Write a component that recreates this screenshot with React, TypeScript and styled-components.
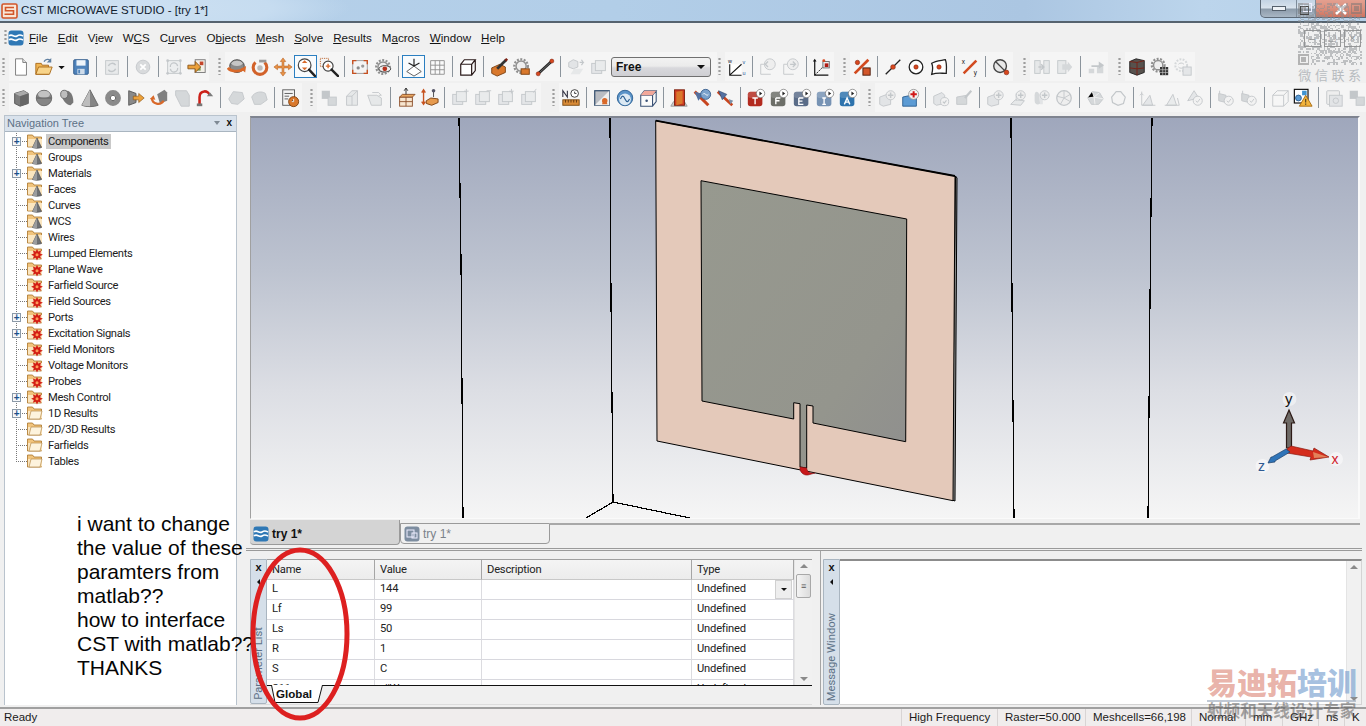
import React from "react";
import styled, { createGlobalStyle } from "styled-components";

const Global = createGlobalStyle`
  html, body { margin: 0; padding: 0; background: #f0f0f0; overflow: hidden; }
  * { box-sizing: border-box; }
`;

const UI = `"Liberation Sans", Arial, sans-serif`;
const NARROW = `Roboto, "Liberation Sans", sans-serif`;
const CJK = `"Liberation Sans", "Noto Sans CJK SC", sans-serif`;

const Root = styled.div`
  position: relative; width: 1366px; height: 726px; overflow: hidden;
  display: flex; flex-direction: column; background: #f0f0f0;
  font: 12px/14px ${UI}; color: #151515;
`;
const TitleBar = styled.header`
  flex: 0 0 23px; display: flex; align-items: flex-start; padding: 3px 0 0 1px; gap: 3px;
  background: radial-gradient(ellipse 260px 34px at 90px 8px, #cfe1f2 0, #c6dcf0 70%, transparent 100%),
    linear-gradient(90deg, #b7d1ea, #b2cee8 45%, #abc6e2 75%, #bcd5ec 88%, #b6d0e8);
  border-bottom: 2px solid #56636f; box-shadow: 0 1px 0 #fff;
`;
const TitleText = styled.h1`
  margin: 0; font: 400 11.5px/15px ${UI}; color: #10202e; flex: 1;
`;
const WinButtons = styled.div`
  display: flex; margin-top: -3px; height: 18px; width: 106px;
  border: 1px solid #5d6a78; border-top: 0; border-radius: 0 0 0 5px;
  background: linear-gradient(#c3d3e3, #d8e2ec 45%, #8d9cab 55%, #a8b6c4);
`;
const WinBtn = styled.span<{ $w: number; $red?: boolean }>`
  width: ${p => p.$w}px; display: flex; align-items: center; justify-content: center;
  border-right: 1px solid #7e8c9a; color: #fff;
  ${p => p.$red ? "background: linear-gradient(#e4a090, #da8f7d 50%, #cf7460); border-right: 0;" : ""}
`;
const MenuBar = styled.nav`
  flex: 0 0 29px; display: flex; align-items: center; padding: 1px 5px 0 3px; background: #f0f0f0;
`;
const Grip = styled.span`
  flex: 0 0 8px; align-self: stretch; margin: 6px 0;
  background: radial-gradient(circle at 2.5px 1px, #9d9d9d 1px, transparent 1.3px) 0 0 / 8px 4px repeat-y;
`;
const MenuGrip = styled(Grip)`flex-basis: 5px; margin: 6px 0;`;
const LogoGap = styled.span`flex: 0 0 5px;`;
const MenuItem = styled.span`
  margin-right: 10px; font-size: 11.6px; color: #141414; white-space: nowrap;
  u { text-underline-offset: 1px; }
`;
const MdiButtons = styled.div`
  margin-left: auto; display: flex; gap: 3px; opacity: .55;
`;
const MdiBtn = styled.span`
  width: 17px; height: 17px; border: 1px solid #555; display: flex; align-items: center; justify-content: center;
  font: 11px/11px ${UI}; color: #444;
`;
const ToolRow = styled.div<{ $h: number }>`
  flex: 0 0 ${p => p.$h}px; display: flex; padding-left: 1px; align-items: flex-start;
`;
const ToolGroup = styled.div<{ $ml?: number }>`
  display: flex; align-items: center; height: 29px; margin-left: ${p => p.$ml ?? 0}px;
  padding-right: 1px; background: linear-gradient(90deg, transparent 8px, #f5f5f5 8px);
`;
const Tool = styled.span<{ $w?: number; $active?: boolean }>`
  flex: 0 0 ${p => p.$w ?? 23}px; width: ${p => p.$w ?? 23}px; min-width: 0; height: 23px; display: flex; align-items: center; justify-content: center;
  ${p => p.$active ? "outline: 1px solid #2b7fc1; outline-offset: -1px; background: #f8fbfd;" : ""}
`;
const ToolSvg = styled.svg`flex: none;`;
const ToolSep = styled.span`
  flex: 0 0 8px; height: 21px; display: flex; justify-content: center;
  &::before { content: ""; width: 1px; background: #8b949c; }
`;
const Combo = styled.div`
  flex: 0 0 100px; height: 20px; margin: 0 5px 0 1px; padding: 0 5px 0 4px; display: flex; align-items: center;
  justify-content: space-between; border: 1px solid #707070; border-radius: 3px;
  background: linear-gradient(#f2f2f2, #ebebeb 45%, #d8d8dc 55%, #cfcfd3);
  font: 700 12px ${UI}; color: #111;
  &::after { content: ""; border: 4px solid transparent; border-top: 4px solid #111; border-bottom: 0; }
`;
const Main = styled.main`
  flex: 1; min-height: 0; display: flex;
`;
const NavPanel = styled.aside`
  flex: 0 0 233px; margin: 0 13px 0 4px; display: flex; flex-direction: column;
  border-right: 1px solid #b9c3cd; border-left: 1px solid #b9c3cd; background: #fff;
`;
const NavHeader = styled.div`
  flex: 0 0 16px; display: flex; align-items: center; justify-content: space-between; padding: 0 4px 1px 2px;
  background: #d9e2ec; color: #5d7186; font-size: 11px; border-top: 1px solid #b9c3cd; border-bottom: 1px solid #a9b5c0;
`;
const HeaderBtns = styled.span`
  display: flex; align-items: center; gap: 6px; color: #111; font: 700 10px/10px ${UI};
`;
const DropCaret = styled.span`
  width: 0; height: 0; border: 3px solid transparent; border-top: 4px solid #7f8a94; border-bottom: 0;
`;
const Tree = styled.ul`
  margin: 0; padding: 1px 0 0 0; list-style: none; font: 11.2px/15px ${NARROW}; letter-spacing: -.33px;
`;
const TreeRow = styled.li`
  position: relative; display: flex; align-items: center; height: 16px; padding-left: 11px;
`;
const Gutter = styled.span<{ $last?: boolean }>`
  flex: 0 0 11px; height: 16px;
  background:
    repeating-linear-gradient(90deg, #777 0 1px, transparent 1px 2px) 0 8px / 11px 1px no-repeat,
    repeating-linear-gradient(#777 0 1px, transparent 1px 2px) 0 0 / 1px ${p => p.$last ? 8 : 16}px no-repeat;
`;
const Expander = styled.span`
  position: absolute; left: 7px; top: 4px; width: 9px; height: 9px; background: #f6f8fa; border: 1px solid #8c9aa8;
  display: flex; align-items: center; justify-content: center; color: #1b4f8a; font: 700 10px/8px ${UI};
`;
const TreeIcon = styled.span`flex: 0 0 17px; height: 16px; display: flex;`;
const TreeLabel = styled.span<{ $sel?: boolean }>`
  margin-left: 2px; padding: 0 2px; height: 15px; white-space: nowrap; color: #1c1c1c;
  background: ${p => p.$sel ? "#c9c9c9" : "transparent"};
`;
const RightPane = styled.section`
  flex: 1; min-width: 0; display: flex; flex-direction: column; padding-right: 4px;
`;
const Viewport = styled.div`
  flex: 0 0 403px; margin: 1px 2px 0 0; border-top: 2px solid #7f8490; border-left: 1px solid #a0a0a0;
  border-right: 2px solid #fafafa; border-bottom: 1px solid #fafafa;
  background: linear-gradient(#9fa7bc 0%, #bdc3d0 38%, #dcdee4 68%, #f5f5f5 100%); overflow: hidden;
  display: flex;
`;
const TabStrip = styled.div`
  flex: 0 0 29px; display: flex; align-items: flex-start; padding-top: 1px; margin-right: 2px;
`;
const DocTab = styled.div<{ $active?: boolean }>`
  flex: 0 0 150px; display: flex; align-items: center; gap: 3px;
  padding: ${p => p.$active ? "3px 0 0 3px" : "0 0 0 3px"};
  height: ${p => p.$active ? 25 : 21}px; margin-top: ${p => p.$active ? 0 : 3}px;
  background: ${p => p.$active ? "#d4d4d4" : "#f0f0f0"};
  color: ${p => p.$active ? "#111" : "#7b828a"}; font-weight: ${p => p.$active ? 700 : 400};
  border-right: 1px solid #9a9a9a; border-bottom: 1px solid #9a9a9a;
  border-top: ${p => p.$active ? "0" : "1px solid #9a9a9a"};
  border-left: ${p => p.$active ? "0" : "1px solid #9a9a9a"}; border-radius: 0 0 4px 4px;
`;
const TabFill = styled.div`
  flex: 1; margin-top: 3px; border-top: 2px solid #a8a8a8;
`;
const HRule = styled.div`
  flex: 0 0 3px; border-top: 1px solid #9a9a9a; border-bottom: 1px solid #9a9a9a; margin-left: -4px;
`;
const Dock = styled.div`
  flex: 0 0 157px; display: flex; padding-top: 8px;
`;
const ParamPanel = styled.div`
  flex: 0 0 562px; display: flex; height: 146px; border-bottom: 1px solid #ddd;
`;
const SideTab = styled.div`
  flex: 0 0 17px; display: flex; flex-direction: column; align-items: center; justify-content: flex-start;
  background: #d5dfe9; border: 1px solid #a9b5c0; border-radius: 0 0 2px 2px; color: #5d7186;
`;
const SideClose = styled.span`font: 700 11px/11px ${UI}; color: #111; margin-top: 2px;`;
const SideArrow = styled.span`
  width: 0; height: 0; margin-top: 6px; border: 3px solid transparent; border-right: 3px solid #111; border-left: 0;
`;
const SideLabel = styled.span`
  margin-top: auto; margin-bottom: 3px; writing-mode: vertical-rl; transform: rotate(180deg); font: 11.2px/15px ${NARROW}; white-space: nowrap;
`;
const ParamBody = styled.div`
  flex: 1; display: flex; flex-direction: column; min-width: 0;
`;
const GridWrap = styled.div`
  flex: 0 0 127px; display: flex; overflow: hidden; border-top: 1px solid #a0a0a0; border-bottom: 1px solid #111;
  font: 11.2px/15px ${NARROW}; letter-spacing: -.2px;
`;
const ParamGrid = styled.div`
  flex: 0 0 527px; display: grid; grid-template-columns: 108px 107px 210px 102px; grid-auto-rows: 20px; align-content: start;
`;
const HeadCell = styled.div`
  padding: 2px 0 0 5px; background: linear-gradient(#f4f4f4, #ececec); border-right: 1px solid #a5a5a5; border-bottom: 1px solid #c8c8c8;
  color: #222;
`;
const Cell = styled.div`
  position: relative; padding: 1px 0 0 5px; background: #fff; border-right: 1px solid #dcdce0; border-bottom: 1px solid #d8d8de; color: #222;
`;
const CellDrop = styled.span`
  position: absolute; right: 1px; top: 0; width: 17px; height: 19px; background: #eee; border: 1px solid #d0d0d0;
  display: flex; align-items: center; justify-content: center;
  &::after { content: ""; border: 3px solid transparent; border-top: 3px solid #111; border-bottom: 0; }
`;
const VScroll = styled.div`
  flex: 1; display: flex; flex-direction: column; align-items: center; background: #f1f1f1; border-left: 1px solid #e4e4e4; padding: 4px 0;
`;
const ScrollUp = styled.span`width: 0; height: 0; border: 4px solid transparent; border-bottom: 4px solid #8a8a8a; border-top: 0;`;
const ScrollDown = styled.span`margin-top: auto; width: 0; height: 0; border: 4px solid transparent; border-top: 4px solid #8a8a8a; border-bottom: 0;`;
const ScrollThumb = styled.span`
  width: 15px; height: 24px; margin-top: 6px; background: linear-gradient(90deg, #f4f4f4, #dcdcdc); border: 1px solid #a8a8a8; border-radius: 2px;
  display: flex; align-items: center; justify-content: center; color: #555; font-size: 9px; line-height: 6px;
`;
const SheetTabs = styled.div`flex: 1; display: flex; padding-left: 4px; align-items: flex-start;`;
const SheetTab = styled.div`
  position: relative; width: 52px; height: 18px; margin-top: -1px; padding: 2px 0 0 5px; font: 700 11.6px/14px ${UI}; color: #111;
`;
const SheetTabOutline = styled.svg`position: absolute; left: 0; top: 0; z-index: 0;`;
const SheetTabText = styled.span`position: relative; z-index: 1;`;
const Splitter = styled.div`
  flex: 0 0 1px; margin: -8px 2px 0 8px; background: #a5a5a5;
`;
const MsgPanel = styled.div`
  flex: 1; display: flex; height: 146px; min-width: 0;
`;
const MsgBody = styled.div`
  flex: 1; display: flex; justify-content: flex-end; background: #fff; border-top: 2px solid #8c8c8c; border-right: 1px solid #d4d4d4; border-bottom: 1px solid #d4d4d4;
`;
const MsgScroll = styled(VScroll)`flex: 0 0 15px; padding: 4px 0 3px;`;
const StatusBar = styled.footer`
  flex: 0 0 18px; display: flex; background: #f0eded; border-top: 2px solid #a0a0a0; box-shadow: 0 -2px 0 #f0f0f0;
`;
const StatusCell = styled.span<{ $w?: number }>`
  ${p => p.$w ? `flex: 0 0 ${p.$w}px; border-left: 1px solid #d8d4d4; padding-left: 7px;` : "flex: 1; padding-left: 4px;"}
  white-space: nowrap; font-size: 11.5px; line-height: 17px; color: #1b1b1b;
`;
const Note = styled.div`
  position: absolute; left: 77px; top: 512px; font: 21px/24px ${UI}; color: #050505; white-space: pre; pointer-events: none;
`;
const Ring = styled.svg`position: absolute; left: 245px; top: 540px; pointer-events: none;`;
const QrBox = styled.div`
  position: absolute; left: 1297px; top: 3px; width: 66px; display: flex; flex-direction: column; align-items: center; gap: 3px; pointer-events: none;
`;
const QrCaption = styled.span`
  font: 13px/15px ${CJK}; letter-spacing: 3.6px; margin-right: -3px; color: #b8bcc0; white-space: nowrap;
`;
const WaterMark = styled.div`
  position: absolute; left: 1207px; top: 667px; width: 156px; display: flex; flex-direction: column; align-items: flex-start; pointer-events: none;
`;
const WaterBig = styled.span`
  font: 900 30px/33px ${CJK}; white-space: nowrap; color: rgba(218, 130, 115, .62);
`;
const WaterBlue = styled.span`color: rgba(122, 162, 208, .68);`;
const WaterSmall = styled.span`
  font: 700 16.6px/19px ${CJK}; color: rgba(80, 80, 80, .5); white-space: nowrap; border-top: 2px solid rgba(150, 165, 185, .6);
`;

/* ---------- icons ---------- */
const D = "#d5d8da"; const DS = "#c3c7ca";
const Gear = ({ x = 11, y = 11, r = 5, c = "#8f8f8f" }: any) => (
  <><circle cx={x} cy={y} r={r + 1.5} fill="none" stroke={c} strokeWidth="2.4" strokeDasharray="2.2 1.6" /><circle cx={x} cy={y} r={r - .4} fill="#eee" stroke={c} strokeWidth="1.6" /></>
);
const Mag = ({ x = 9, y = 9, r = 6, c = "#444" }: any) => (
  <><circle cx={x} cy={y} r={r} fill="#fff" stroke={c} strokeWidth="1.3" /><path d={`M${x + r * .7} ${y + r * .7}L21 21`} stroke="#222" strokeWidth="2.6" strokeLinecap="round" /></>
);
const Dot = ({ x, y, r = 2 }: any) => <circle cx={x} cy={y} r={r} fill="#d8481f" stroke="#7a1d0c" strokeWidth=".6" />;
const Play = ({ c, t }: { c: string; t: string }) => (
  <>
    <rect x="2" y="4" width="16" height="16" rx="3" fill={c} />
    <rect x="2" y="4" width="16" height="7" rx="3" fill="#fff" opacity=".16" />
    <path d={t} stroke="#fff" strokeWidth="1.5" fill="none" />
    <circle cx="16" cy="6" r="4.6" fill="#fff" stroke="#666" strokeWidth=".7" /><path d="M14.8 3.8l3 2.2-3 2.2z" fill="#222" />
  </>
);
const dSquares = <><rect x="3" y="7" width="11" height="11" fill="#e4e6e8" stroke={DS} /><rect x="7" y="4" width="11" height="11" fill="#e9ebec" stroke={DS} /></>;
const dPlusDoc = <><path d="M3 10l8-3 4 3v8l-8 2-4-2z" fill="#e2e4e6" stroke={DS} /><circle cx="15" cy="8" r="5" fill="#eee" stroke={DS} /><path d="M15 5v6M12 8h6" stroke={DS} strokeWidth="1.6" /></>;
const dCheck = <><path d="M3 9l9-4 3 3v9l-9 2-3-2z" fill="#e2e4e6" stroke={DS} /><circle cx="15" cy="15" r="4.5" fill="#f1f1f1" stroke={DS} /><path d="M13 15l1.6 1.6L17 13.6" stroke={DS} fill="none" strokeWidth="1.2" /></>;

const icons: Record<string, React.ReactNode> = {
  new: <><path d="M5 2h8l4 4v14H5z" fill="#fff" stroke="#777" /><path d="M13 2v4h4" fill="#e8e8e8" stroke="#777" /></>,
  open: <><path d="M2 7h6l1 2h7v10H2z" fill="#f0b552" stroke="#a96a1a" /><path d="M2 19l3-8h15l-3 8z" fill="#f8d48a" stroke="#a96a1a" /><path d="M11 5c2-3 5-3 7-1" fill="none" stroke="#5f7fa0" strokeWidth="1.5" /><path d="M19 1v5h-5z" fill="#5f7fa0" /></>,
  caret: <path d="M7 10h7l-3.5 3.5z" fill="#111" />,
  save: <><rect x="3" y="3" width="16" height="16" rx="1" fill="#4f83bb" stroke="#2b5687" /><rect x="6" y="3.5" width="10" height="6" fill="#eef4fa" /><rect x="7" y="13" width="8" height="6" fill="#cfdcea" /><rect x="8" y="14" width="2" height="4" fill="#4f83bb" /></>,
  dsync: <><rect x="4" y="4" width="14" height="15" fill="#e8eaeb" stroke={DS} /><path d="M7 10a4.5 4.5 0 0 1 8-1M15 13a4.5 4.5 0 0 1-8 1" fill="none" stroke={DS} strokeWidth="1.6" /></>,
  dx: <><circle cx="11" cy="11" r="7.5" fill="#d8dadc" stroke={DS} /><path d="M8 8l6 6M14 8l-6 6" stroke="#fff" strokeWidth="2" /></>,
  dframe: <><rect x="4" y="4" width="14" height="14" fill="#eceeef" stroke={DS} /><circle cx="4" cy="4" r="1.5" fill={DS} /><circle cx="18" cy="4" r="1.5" fill={DS} /><circle cx="4" cy="18" r="1.5" fill={DS} /><circle cx="18" cy="18" r="1.5" fill={DS} /><path d="M7 11a4 4 0 0 1 8-1M15 12a4 4 0 0 1-8 1" fill="none" stroke={DS} strokeWidth="1.4" /></>,
  export: <><rect x="9" y="3" width="11" height="14" fill="#f2efe8" stroke="#777" /><rect x="14" y="5" width="4" height="4" fill="#c4452a" /><rect x="11" y="11" width="4" height="4" fill="#7f9a4f" /><path d="M1 9h8V5l6 6-6 6v-4H1z" fill="#eba13a" stroke="#8a5417" /></>,
  orbit: <><ellipse cx="11" cy="10" rx="8" ry="7" fill="#8a8a8a" stroke="#444" /><ellipse cx="11" cy="7" rx="6" ry="3" fill="#c6c6c6" /><path d="M1 12c3 4 11 5 18 1" fill="none" stroke="#d9692a" strokeWidth="3" /><path d="M21 10l-1 7-5-4z" fill="#d9692a" /></>,
  rotate: <><path d="M6 6a7.5 7.5 0 1 0 10 0" fill="none" stroke="#d2622a" strokeWidth="3.4" /><circle cx="11" cy="12" r="3" fill="#bbb" /><path d="M10 3h8v3h-8z" fill="#999" /></>,
  pan: <path d="M11 1l3 4h-2v5h5V8l4 3-4 3v-2h-5v5h2l-3 4-3-4h2v-5H5v2l-4-3 4-3v2h5V5H8z" fill="#e9944a" stroke="#b35c1a" strokeWidth=".6" />,
  zoom: <><Mag x={9.5} y={9} r={7} /><path d="M9.5 3.5l3 3h-6zM9.5 14.5l3-3h-6z" fill="#d9692a" /></>,
  zoomsel: <><rect x="1.5" y="1.5" width="9" height="9" fill="none" stroke="#b5561b" strokeDasharray="1 1" /><Mag x={10} y={10} r={5.5} /><path d="M10 7.5v5M7.5 10h5" stroke="#d9692a" strokeWidth="1.5" /></>,
  fit: <><rect x="3" y="4" width="16" height="14" fill="#f4f4f4" stroke="#999" /><path d="M3 8V4h4M15 4h4v4M19 14v4h-4M7 18H3v-4" fill="none" stroke="#c84f1f" strokeWidth="1.5" /><circle cx="9" cy="12" r="1.8" fill="#8b8b8b" /><circle cx="14" cy="10" r="1.8" fill="#999" /></>,
  gearEye: <><Gear r={6} /><ellipse cx="13" cy="13" rx="6.5" ry="3.5" fill="#eee" stroke="#444" /><circle cx="13" cy="13" r="2.6" fill="#b5301c" /></>,
  axis: <><path d="M11 10l8 6-8 5-8-5z" fill="#fff" stroke="#555" /><path d="M11 10V2M11 10l-6-3.5M11 10l6-3.5" stroke="#222" strokeWidth="1.3" fill="none" /></>,
  grid: <path d="M4 4h15v15H4zM4 9h15M4 14h15M9 4v15M14 4v15" fill="#fafafa" stroke="#8f8f8f" />,
  cube: <path d="M3 8h12v12H3zM3 8l4-5h12l-4 5M19 3v12l-4 5" fill="#fff" stroke="#2a1a1a" strokeWidth="1.3" />,
  brick: <><path d="M3 12l9-4 6 3v6l-9 4-6-3z" fill="#d9782c" stroke="#7a3f10" /><path d="M9 13L19 3" stroke="#333" strokeWidth="3" /><path d="M19 1l2 2-2 2-2-2z" fill="#7d1f12" /></>,
  gearBrick: <><Gear x={10} y={10} r={6} /><rect x="10" y="13" width="9" height="6" fill="#d9782c" stroke="#7a3f10" /></>,
  lineDots: <><path d="M4 18L18 5" stroke="#222" strokeWidth="3" /><path d="M4 18L18 5" stroke="#777" strokeWidth="1" /><Dot x={3.5} y={18.5} r={2.2} /><Dot x={18.5} y={4.5} r={2.2} /></>,
  dmove: <><path d="M3 6l5-3 5 2v6l-5 2-5-2z" fill="#e2e4e6" stroke={DS} /><path d="M5 19l4-6h10l-4 6z" fill="#e6e8e9" /><path d="M15 6h4l-2-3M19 6l-2 3" stroke={DS} fill="none" strokeWidth="1.3" /></>,
  dsq: dSquares,
  wcsAlign: <><rect x="3" y="8" width="13" height="12" fill="#fff" /><path d="M3 8v12h13M3 20L16 8" stroke="#111" strokeWidth="1.2" fill="none" /><text x="1" y="7" fontSize="6" fill="#123" fontFamily="Liberation Sans">w</text><text x="17" y="8" fontSize="6" fill="#1a5a9a" fontFamily="Liberation Sans">v</text><text x="17" y="20" fontSize="6" fill="#1a5a9a" fontFamily="Liberation Sans">u</text></>,
  dround: <><path d="M3 19V8h5M3 19h11" stroke={DS} fill="none" /><circle cx="13" cy="8" r="6" fill="#eee" stroke={DS} /><path d="M11 5l-3 3 3 3" stroke={DS} fill="none" strokeWidth="1.4" /></>,
  dround2: <><path d="M3 19V8h5M3 19h11" stroke={DS} fill="none" /><circle cx="13" cy="8" r="6" fill="#eee" stroke={DS} /><path d="M10 8h6M13 5l3 3-3 3" stroke={DS} fill="none" strokeWidth="1.4" /></>,
  wcsPick: <><path d="M3 4v16h15" stroke="#111" strokeWidth="1.3" fill="none" /><path d="M3 20L15 8" stroke="#111" strokeDasharray="2 1" /><path d="M1 5l2-3 2 3z" fill="#111" /><rect x="12" y="5" width="7" height="7" fill="#eee" stroke="#666" /><rect x="14" y="7" width="4" height="4" fill="#b01a12" /><circle cx="13" cy="4" r="1.6" fill="#d8481f" /></>,
  percent: <><path d="M3 18L18 3" stroke="#d24a1f" strokeWidth="3" /><Dot x={6} y={6} r={2.4} /><rect x="12" y="12" width="8" height="8" fill="#d2562a" stroke="#4a1a0a" /></>,
  line: <><path d="M3 19L19 3" stroke="#222" strokeWidth="1.4" /><Dot x={11} y={11} r={2.6} /></>,
  spot: <><circle cx="11" cy="11" r="7.5" fill="#fff" stroke="#222" strokeWidth="1.4" /><Dot x={11} y={11} r={2.4} /></>,
  face: <><path d="M3 7c4-3 10-3 15-4 2 5 1 10 1 15-6 0-10-1-16 1 1-4 2-8 0-12z" fill="#fff" stroke="#222" strokeWidth="1.4" /><Dot x={11} y={11} r={2.4} /></>,
  xy: <><path d="M4 18L18 4" stroke="#d24a1f" strokeWidth="2.8" /><text x="2" y="8" fontSize="7" fill="#111" fontFamily="Liberation Sans">x</text><text x="15" y="20" fontSize="7" fill="#111" fontFamily="Liberation Sans">y</text></>,
  noPick: <><circle cx="10" cy="10" r="7" fill="#e8e8e8" stroke="#444" strokeWidth="1.5" /><path d="M5 5l10 10" stroke="#444" strokeWidth="1.5" /><Dot x={17} y={17} r={2.6} /></>,
  dport: <><rect x="3" y="4" width="6" height="14" fill="#e6e8e9" stroke={DS} /><rect x="13" y="4" width="6" height="14" fill="#e6e8e9" stroke={DS} /><path d="M7 11h6M10 8l3 3-3 3" stroke={DS} fill="none" strokeWidth="1.6" /></>,
  dport2: <><rect x="3" y="4" width="9" height="14" fill="#e6e8e9" stroke={DS} /><path d="M8 8h6V5l5 6-5 6v-3H8z" fill={D} /></>,
  dstairs: <><path d="M3 18V13h6v5zM12 18V10h7v8z" fill={D} /><path d="M6 9h8V5l6 4-6 4v-2H6z" fill={DS} /></>,
  mesh3d: <><path d="M3 5l7-3 9 2v13l-8 3-8-3z" fill="#57524e" stroke="#222" /><path d="M11 6v14M3 5l8 1 8-2M3 12l8 1 8-1" stroke="#7a1f14" fill="none" /></>,
  gearGrid: <><Gear x={9} y={9} r={5.5} /><rect x="11" y="11" width="9" height="9" fill="#333" /><path d="M11 14h9M11 17h9M14 11v9M17 11v9" stroke="#ccc" strokeWidth=".7" /></>,
  dgearGrid: <><circle cx="9" cy="9" r="6.5" fill="none" stroke={D} strokeWidth="2.2" strokeDasharray="2 1.5" /><path d="M6 8a4 4 0 0 1 6 0M12 11a4 4 0 0 1-6 0" stroke={DS} fill="none" /><rect x="11" y="11" width="9" height="9" fill="#e4e6e8" stroke={DS} /></>,
  box: <><path d="M4 6l10-3 5 3v11l-9 3-6-3z" fill="#7d7d7d" stroke="#555" /><path d="M4 6l10-3 5 3-9 3z" fill="#aaa" /><path d="M10 9v11l9-3V6z" fill="#666" /></>,
  sphere: <><circle cx="11" cy="11" r="8.5" fill="#858585" stroke="#666" /><ellipse cx="11" cy="7" rx="6.5" ry="4" fill="#c2c2c2" /><path d="M3 11h16" stroke="#5a5a5a" /></>,
  cylinder: <><path d="M5 5l7-2c4 2 6 6 6 13l-3 3c-5 0-10-6-10-14z" fill="#777" /><ellipse cx="8" cy="7" rx="4" ry="4.5" fill="#bdbdbd" stroke="#666" /></>,
  cone: <><path d="M11 2L20 19c-4 2-14 2-18 0z" fill="#858585" stroke="#666" /><path d="M11 2L11 20c-3 0-6 0-9-1z" fill="#bdbdbd" /></>,
  torus: <><circle cx="11" cy="11" r="6" fill="none" stroke="#8a8a8a" strokeWidth="5.4" /><circle cx="11" cy="11" r="3" fill="#fff" stroke="#555" /></>,
  extrude: <><path d="M3 3l8 3v10l-8 3z" fill="#8a8a8a" stroke="#555" /><path d="M8 9h6V6l6 5-6 5v-3H8z" fill="#eca13a" stroke="#8a5417" strokeWidth=".7" /></>,
  rotObj: <><path d="M9 7l8-5 3 3v9l-8 3z" fill="#808080" /><path d="M3 11a7 7 0 0 0 13 3" fill="none" stroke="#d9692a" strokeWidth="2.6" /><path d="M1 12l4-4 2 5z" fill="#d9692a" /></>,
  dloft: <path d="M4 3h12l3 5v12h-9L4 8z" fill={D} stroke={DS} />,
  bend: <><path d="M5 19V10c0-8 10-8 11-2" fill="none" stroke="#cc2018" strokeWidth="2.8" /><path d="M13 9h7l-3.5-4z" fill="#7a7a7a" /><path d="M2 20h6v-3H2z" fill="#777" /></>,
  dsolid: <path d="M3 12l5-8 10 1 2 7-7 6-7-1z" fill={D} stroke={DS} />,
  dsolid2: <path d="M3 10c3-6 11-7 15-4l2 7-7 5H6z" fill={D} stroke={DS} />,
  timer: <><rect x="3" y="2" width="13" height="17" fill="#f4f4f4" stroke="#555" /><path d="M5 6h9M5 9h5M5 12h4" stroke="#555" /><circle cx="15" cy="15" r="5.5" fill="#d9782c" stroke="#7a3f10" /><path d="M15 12v3h-2" stroke="#fff" /></>,
  dsplit: <><rect x="3" y="3" width="9" height="9" fill={DS} /><rect x="10" y="10" width="9" height="9" fill={D} stroke={DS} /></>,
  dcyl: <path d="M5 19V9l6-6h6v16zM5 9h6v10M11 9l6-6" fill="#e6e8e9" stroke={DS} />,
  dfold: <><path d="M3 8h10l5 3v8H7z" fill="#e6e8e9" stroke={DS} /><path d="M8 5h7l3 3h-3" stroke={DS} fill="none" /></>,
  boxTop: <><rect x="4" y="10" width="14" height="10" fill="#f7e6d0" stroke="#8c4f2a" /><path d="M4 10l3-3h14l-3 3zM11 10v10M4 15h14" stroke="#8c4f2a" fill="#e8a75f" /><path d="M11 7V1M9 3l2-3 2 3" stroke="#222" fill="none" /></>,
  boxSplit: <><path d="M5 3v14M3 5l2-3 2 3M3 15l2 3 2-3" stroke="#c7531f" fill="none" strokeWidth="1.5" /><path d="M8 14l5-3 8 1v4l-7 3-6-2z" fill="#e69a4e" stroke="#7a3f10" /><path d="M16 10V3" stroke="#444" /><circle cx="16" cy="3" r="2" fill="#556" /></>,
  dplusSq: <>{dSquares}<path d="M18 1v5M15.5 3.5h5" stroke={DS} /></>,
  dminusSq: <>{dSquares}<path d="M15 3h5" stroke={DS} /></>,
  dstarSq: <>{dSquares}<path d="M17 1v5M14.5 3.5h5" stroke={DS} /></>,
  dslashSq: <>{dSquares}<path d="M16 5l3-4" stroke={DS} /></>,
  ruler: <><rect x="2" y="13" width="18" height="6" fill="#d88a36" stroke="#7a4a14" /><path d="M5 13v3M8 13v3M11 13v3M14 13v3M17 13v3" stroke="#5a3410" /><circle cx="15" cy="6" r="4.2" fill="#fff" stroke="#333" /><path d="M15 4v2h2" stroke="#333" fill="none" /><path d="M2 10V3l5 7V3" stroke="#334" fill="none" strokeWidth="1.2" /></>,
  material: <><rect x="3" y="3" width="16" height="16" fill="#b9bcc2" stroke="#2f4a6a" strokeWidth="1.3" /><path d="M3 19L19 3v16z" fill="#eee" /><circle cx="14" cy="14" r="3" fill="#d9692a" /><path d="M11 18h6l-1-3h-4z" fill="#d9692a" /></>,
  wave: <><circle cx="11" cy="11" r="8.5" fill="#5a93c8" stroke="#2b5f92" /><circle cx="11" cy="12.5" r="6.5" fill="#dce9f3" /><path d="M6 12c2-4 3-4 5 0s3 4 5 0" fill="none" stroke="#2b5f92" strokeWidth="1.3" /></>,
  boundary: <><path d="M3 8h13v12H3zM3 8l4-5h13l-4 5M20 3v12l-4 5" fill="#fbfbfb" stroke="#3a5276" strokeWidth="1.2" /><path d="M7 3h13l-4 5H3z" fill="#f2a79a" /><circle cx="9.5" cy="14" r="1.4" fill="#3a5276" /></>,
  door: <><path d="M2 20l3-5h12l3 5z" fill="#ccc" stroke="#999" /><rect x="6" y="2" width="11" height="17" fill="#cf3a22" stroke="#7a1d0c" /><path d="M8 4l7-1v14l-7 2z" fill="#d9782c" /></>,
  probeGlobe: <><path d="M3 4l15 15" stroke="#c7451f" strokeWidth="3.4" /><path d="M3 4l4 10 3-4 4-3z" fill="#5470a0" /><circle cx="15" cy="7" r="5.5" fill="#7ba2cc" stroke="#3a5f8d" /><path d="M12 7c2-3 4 3 6 0" stroke="#fff" fill="none" /></>,
  probe: <><path d="M3 4l16 15" stroke="#c7451f" strokeWidth="3" /><path d="M4 3l9 4-5 6z" fill="#5470a0" stroke="#2b4469" strokeWidth=".6" /><path d="M15 12l5 2-3 4z" fill="#7a8fa8" /></>,
  playT: <Play c="#b32a1f" t="M7 11h6M10 11v7" />,
  playF: <Play c="#6c6e68" t="M7.5 11v7M7.5 11h5M7.5 14h4" />,
  playE: <Play c="#5a6c88" t="M7.5 11v7h5M7.5 11h5M7.5 14.5h4" />,
  playI: <Play c="#7793b4" t="M10 11v7M8 11h4M8 18h4" />,
  playA: <Play c="#2e73ad" t="M7 18l3-7 3 7M8 15.5h4" />,
  dPlusD: dPlusDoc,
  bluePlus: <><path d="M3 10l9-2v3h6v9H3z" fill="#5c9bd4" stroke="#2b5f92" /><circle cx="15" cy="7" r="5.5" fill="#f4f4f4" stroke="#999" /><path d="M15 3.5v7M11.5 7h7" stroke="#d01818" strokeWidth="2.2" /></>,
  dcheck: dCheck,
  dbrush: <><path d="M3 10l11-2v10H3z" fill={D} stroke={DS} /><path d="M12 11l7-8" stroke={DS} strokeWidth="2.4" /></>,
  dplane: <><path d="M3 18l5-5 10 1-4 5z" fill="#e6e8e9" stroke={DS} /><path d="M9 14V6" stroke={DS} /><circle cx="14" cy="8" r="5" fill="#eee" stroke={DS} /><path d="M14 5v6M11 8h6" stroke={DS} strokeWidth="1.5" /></>,
  dfaces: <><path d="M4 8c0-5 4-5 5-1l1 10c-3 3-6 0-6-3z" fill={D} /><path d="M9 8c1-4 4-4 4 0v10h-3z" fill="#e2e4e6" /><circle cx="15" cy="8" r="5" fill="#eee" stroke={DS} /><path d="M15 5v6M12 8h6" stroke={DS} strokeWidth="1.5" /></>,
  dball: <><circle cx="11" cy="11" r="8" fill="#eee" stroke={DS} strokeWidth="1.4" /><path d="M11 3v8l7-4M11 11l7 4M11 11l-4 7M11 11L3 9" stroke={DS} fill="none" /></>,
  dmesh: <><path d="M3 11l5-7 8 1 4 7-5 6-8 0z" fill={D} stroke={DS} /><path d="M8 4l2 6-7 1M10 10l6-5M10 10l10 2M10 10l1 8" stroke="#f2f2f2" /></>,
  dtag: <path d="M4 10l5-6h5l5 6-2 7-6 2-6-3z" fill="#f4f4f4" stroke={DS} strokeWidth="1.3" />,
  dtri: <><path d="M4 19l8-11 3 11z" fill="#e4e6e8" stroke={DS} /><path d="M3 19V4M3 19h15M3 6l-2 2M3 6l2 2" stroke={DS} fill="none" /></>,
  dtri2: <><path d="M5 19L12 7l4 12z" fill="#e9ebec" stroke={DS} /><path d="M3 19h16l-2-8" stroke={DS} fill="none" /></>,
  dtriCheck: <><path d="M3 14L10 3l5 8z" fill="#e4e6e8" stroke={DS} /><circle cx="14" cy="14" r="5" fill="#f2f2f2" stroke={DS} /><path d="M12 14l1.6 1.8L16.5 12" stroke={DS} fill="none" /></>,
  dcheck2: <><path d="M3 6l8 2v8l-8-2z" fill={D} stroke={DS} /><path d="M4 3v3" stroke={DS} /><circle cx="14" cy="14" r="5" fill="#f2f2f2" stroke={DS} /><path d="M12 14l1.6 1.8L16.5 12" stroke={DS} fill="none" /></>,
  dwire: <path d="M3 8h12v12H3zM3 8l5-5h12l-5 5M20 3v12l-5 5" fill="#f6f6f6" stroke={DS} />,
  warnView: <><rect x="1.5" y="1.5" width="15" height="15" fill="#fff" stroke="#111" strokeWidth="1.3" /><rect x="10" y="3" width="5" height="5" fill="#3f93d1" /><circle cx="6" cy="11" r="3.2" fill="#5c9bd4" stroke="#2b5f92" /><path d="M14 8l7 12H7z" fill="#f2b33b" stroke="#a86a10" /><path d="M14 12v4M14 17v1.5" stroke="#222" /></>,
  dwin: <><rect x="3" y="3" width="14" height="15" rx="1" fill="#eee" stroke={DS} /><rect x="6" y="8" width="14" height="12" fill="#e2e4e6" stroke={DS} /><circle cx="13" cy="14" r="3" fill="none" stroke={DS} /></>,
};

const Icon = ({ n, s = 20 }: { n: string; s?: number }) => (
  <ToolSvg width={s} height={s} viewBox="0 0 22 22">{icons[n]}</ToolSvg>
);

type Group = { ml?: number; items: string[] };
const row1: Group[] = [
  { items: ["new", "open", "caret", "save", "|", "dsync", "|", "dx", "|", "dframe", "export"] },
  { ml: 8, items: ["orbit", "rotate", "pan", "*zoom", "zoomsel", "|", "fit", "gearEye", "|", "*axis", "grid", "|", "cube", "|", "brick", "gearBrick", "lineDots", "|", "dmove", "dsq", "combo"] },
  { items: ["wcsAlign", "|", "dround", "dround2", "|", "wcsPick"] },
  { ml: 8, items: ["percent", "|", "line", "spot", "face", "|", "xy", "|", "noPick"] },
  { ml: 9, items: ["dport", "dport2", "|", "dstairs"] },
  { ml: 9, items: ["mesh3d", "gearGrid", "dgearGrid"] },
];
const row2: Group[] = [
  { items: ["box", "sphere", "cylinder", "cone", "torus", "extrude", "rotObj", "dloft", "bend", "|", "dsolid", "dsolid2", "|", "timer"] },
  { ml: 7, items: ["dsplit", "dcyl", "dfold", "|", "boxTop", "boxSplit", "|", "dplusSq", "dminusSq", "dstarSq", "dslashSq"] },
  { ml: 10, items: ["ruler", "|", "material", "wave", "boundary", "|", "door", "probeGlobe", "probe", "|", "playT", "playF", "playE", "playI", "playA"] },
  { ml: 7, items: ["dPlusD", "bluePlus", "|", "dcheck", "dbrush", "|", "dPlusD", "dplane", "dfaces", "dball", "|", "dmesh", "dtag", "|", "dtri", "dtri2", "dtriCheck", "|", "dcheck2", "dcheck2", "|", "dwire", "warnView", "|", "dwin", "dsplit"] },
];

const ToolRowView = ({ groups, h }: { groups: Group[]; h: number }) => (
  <ToolRow $h={h}>
    {groups.map((g, i) => (
      <ToolGroup key={i} $ml={g.ml}>
        <Grip />
        {g.items.map((it, j) =>
          it === "|" ? <ToolSep key={j} /> :
          it === "combo" ? <Combo key={j}>Free</Combo> :
          <Tool key={j} $w={it === "caret" ? 14 : 23} $active={it[0] === "*"}><Icon n={it.replace("*", "")} /></Tool>
        )}
      </ToolGroup>
    ))}
  </ToolRow>
);

const menus: [string, string, string][] = [
  ["", "F", "ile"], ["", "E", "dit"], ["V", "i", "ew"], ["W", "C", "S"], ["C", "u", "rves"], ["O", "b", "jects"],
  ["", "M", "esh"], ["", "S", "olve"], ["", "R", "esults"], ["M", "a", "cros"], ["", "W", "indow"], ["", "H", "elp"],
];

const Folder = ({ kind }: { kind: "cone" | "star" | "doc" }) => (
  <svg width="17" height="16" viewBox="0 0 17 16">
    <path d="M.5 2h5l1.5 2h7.5v10H.5z" fill="#f1c47d" stroke="#a8732a" strokeWidth=".8" />
    <path d="M1 6h14v7.5H1z" fill="#fbe6c0" />
    {kind === "cone" && <><path d="M10 5l4.5 9.5c-3 1-6 1-9 0z" fill="#6f7174" stroke="#4c4f55" strokeWidth=".7" /><path d="M10 5v10c-2 0-3.5 0-4.5-.5z" fill="#9b9c9e" /></>}
    {kind === "star" && <><path d="M10 4l1.3 2.6 2.8-1-.9 2.9 2.7 1.2-2.7 1.3.9 2.8-2.8-1L10 15.4l-1.3-2.6-2.8 1 .9-2.8L4.1 9.7l2.7-1.2-.9-2.9 2.8 1z" fill="#d31f14" /><circle cx="10" cy="9.7" r="1.5" fill="#ff9a5a" /></>}
    {kind === "doc" && <path d="M4 6h11l-2 8H2z" fill="#fdf3dd" stroke="#b58a47" strokeWidth=".7" />}
  </svg>
);

const treeItems: [string, "cone" | "star" | "doc", boolean][] = [
  ["Components", "cone", true], ["Groups", "cone", false], ["Materials", "cone", true], ["Faces", "cone", false],
  ["Curves", "cone", false], ["WCS", "cone", false], ["Wires", "cone", false], ["Lumped Elements", "star", false],
  ["Plane Wave", "star", false], ["Farfield Source", "star", false], ["Field Sources", "star", false], ["Ports", "star", true],
  ["Excitation Signals", "star", true], ["Field Monitors", "star", false], ["Voltage Monitors", "star", false], ["Probes", "star", false],
  ["Mesh Control", "star", true], ["1D Results", "doc", true], ["2D/3D Results", "doc", false], ["Farfields", "doc", false], ["Tables", "doc", false],
];

const params: [string, string][] = [["L", "144"], ["Lf", "99"], ["Ls", "50"], ["R", "1"], ["S", "C"], ["S11", "-#W"]];

const CstWave = ({ gray }: { gray?: boolean }) => (
  <svg width="16" height="16" viewBox="0 0 16 16">
    <rect x=".5" y=".5" width="15" height="15" rx="3" fill={gray ? "#7d8da0" : "#2f78b5"} />
    {gray ? <><rect x="3" y="4" width="7" height="7" fill="none" stroke="#eef" /><rect x="8" y="7" width="5" height="5" fill="none" stroke="#eef" /></> :
      <path d="M1 6c3-3 5 2 8 0s4-1 6 0M1 10c3-3 5 2 8 0s4-1 6 0" fill="none" stroke="#fff" strokeWidth="1.6" />}
  </svg>
);

const Scene = () => (
  <svg width="1107" height="400" viewBox="251 118 1107 400" shapeRendering="crispEdges">
    <g fill="none" stroke="#000" strokeWidth="1.2">
      <path d="M459 118L461 260 463 518" />
      <path d="M610 118L611 300 613 502 586 518" />
      <path d="M613 502L690 518" />
      <path d="M1011 118L1012 300 1014 518" />
      <path d="M1152 118L1150 300 1148 518" />
    </g>
    <g shapeRendering="auto">
      <path d="M955.5 176L957 178 955 501 952 500z" fill="#8f9190" stroke="#000" />
      <path d="M655.7 120.7L955 176 953 500.7 657 441z" fill="#e4c9ba" stroke="#000" strokeWidth="1" />
      <path d="M655.7 120.7L955 176" stroke="#000" strokeWidth="1.8" fill="none" />
      <defs>
        <linearGradient id="patch" x1="0" y1="0" x2="1" y2="1"><stop offset="0" stopColor="#97998f" /><stop offset=".7" stopColor="#94958d" /><stop offset="1" stopColor="#8f8f8e" /></linearGradient>
      </defs>
      <path d="M701 180.7L906.7 219 905.7 441.7 813 423 813 406 806.7 405 806.7 468 800 467 800 403.7 793.7 402.7 793.7 419 702 401z" fill="url(#patch)" stroke="#000" strokeWidth="1" />
      <path d="M800 467A7 7 0 0 0 808 475L815 473C809 474 807 471 806.7 468z" fill="#c8181a" stroke="#8a1012" strokeWidth=".6" />
    </g>
    <g shapeRendering="auto">
      <circle cx="1289.5" cy="399" r="7" fill="#eeeff2" opacity=".9" />
      <circle cx="1336" cy="459" r="7" fill="#f5f5f6" opacity=".9" />
      <circle cx="1262.5" cy="466" r="7" fill="#f5f5f6" opacity=".9" />
      <path d="M1289 410l5.5 13h-3l0 25h-5l0-25h-3z" fill="#6e6a66" stroke="#2c1a16" strokeWidth="1.2" />
      <path d="M1287 449l4-3 22 5 1-3 15 9-19 3 1-3-24-4z" fill="#d42c1c" stroke="#8d1a10" strokeWidth=".7" />
      <path d="M1313 452l15 5-14 1z" fill="#e2825a" />
      <path d="M1286 449l4 3-15 9 0 1-7 1 3-6 1 0z" fill="#2f74b8" stroke="#1d3f68" strokeWidth=".7" />
      <text x="1285" y="404" fontFamily="Liberation Sans" fontSize="15" fill="#111">y</text>
      <text x="1331.5" y="463.5" fontFamily="Liberation Sans" fontSize="14" fill="#d0202a">x</text>
      <text x="1258" y="471" fontFamily="Liberation Sans" fontSize="14" fill="#2f5a92">z</text>
    </g>
  </svg>
);

const qrCells = (() => {
  const out: [number, number][] = [];
  let s = 7331;
  for (let y = 0; y < 40; y++) for (let x = 0; x < 40; x++) {
    s = (s * 1103515245 + 12345) & 0x7fffffff;
    const finder = (x < 8 && y < 8) || (x > 31 && y < 8) || (x < 8 && y > 31);
    if (!finder && (s >> 16) % 100 < 48) out.push([x, y]);
  }
  return out;
})();

const Qr = () => (
  <svg width="64" height="62" viewBox="0 0 40 40" preserveAspectRatio="none" opacity=".5" shapeRendering="crispEdges">
    {qrCells.map(([x, y]) => <rect key={`${x}-${y}`} x={x} y={y} width="1" height="1" fill="#8b8f94" />)}
    {[[0, 0], [33, 0], [0, 33]].map(([x, y]) => (
      <g key={`${x}${y}`}><rect x={x + .5} y={y + .5} width="6" height="6" fill="none" stroke="#777" /><rect x={x + 2} y={y + 2} width="3" height="3" fill="#777" /></g>
    ))}
  </svg>
);

export default function App() {
  return (
    <Root>
      <Global />
      <TitleBar>
        <svg width="17" height="16" viewBox="0 0 17 16">
          <rect x="1" y="1" width="15" height="14" rx="1.5" fill="#f8e6d8" stroke="#d2562a" strokeWidth="1.6" />
          <path d="M13 4.5H4.5v3.2h8v3.6H3.5" fill="none" stroke="#d2562a" strokeWidth="1.6" />
        </svg>
        <TitleText>CST MICROWAVE STUDIO - [try 1*]</TitleText>
        <WinButtons>
          <WinBtn $w={36}><svg width="14" height="6"><rect x=".5" y=".5" width="13" height="4" fill="#eef2f6" stroke="#55606c" /></svg></WinBtn>
          <WinBtn $w={19}><svg width="12" height="12"><rect x="3.5" y=".5" width="8" height="8" fill="none" stroke="#eef" /><rect x=".5" y="3.5" width="8" height="8" fill="none" stroke="#444" /></svg></WinBtn>
          <WinBtn $w={49} $red>
            <svg width="14" height="12"><path d="M2 1l10 10M12 1L2 11" stroke="#fff" strokeWidth="2.6" /></svg>
          </WinBtn>
        </WinButtons>
      </TitleBar>

      <MenuBar>
        <MenuGrip />
        <CstWave />
        <LogoGap />
        {menus.map(([a, u, b]) => <MenuItem key={a + u + b}>{a}<u>{u}</u>{b}</MenuItem>)}
        <MdiButtons>
          <MdiBtn>–</MdiBtn><MdiBtn>□</MdiBtn><MdiBtn>×</MdiBtn>
        </MdiButtons>
      </MenuBar>

      <ToolRowView groups={row1} h={31} />
      <ToolRowView groups={row2} h={32} />

      <Main>
        <NavPanel>
          <NavHeader>
            Navigation Tree
            <HeaderBtns><DropCaret />x</HeaderBtns>
          </NavHeader>
          <Tree>
            {treeItems.map(([label, kind, exp], i) => (
              <TreeRow key={label}>
                <Gutter $last={i === treeItems.length - 1} />
                {exp && <Expander>+</Expander>}
                <TreeIcon><Folder kind={kind} /></TreeIcon>
                <TreeLabel $sel={i === 0}>{label}</TreeLabel>
              </TreeRow>
            ))}
          </Tree>
        </NavPanel>

        <RightPane>
          <Viewport><Scene /></Viewport>
          <TabStrip>
            <DocTab $active><CstWave /> try 1*</DocTab>
            <DocTab><CstWave gray /> try 1*</DocTab>
            <TabFill />
          </TabStrip>
          <HRule />
          <Dock>
            <ParamPanel>
              <SideTab>
                <SideClose>x</SideClose>
                <SideArrow />
                <SideLabel>Parameter List</SideLabel>
              </SideTab>
              <ParamBody>
                <GridWrap>
                  <ParamGrid>
                    <HeadCell>Name</HeadCell><HeadCell>Value</HeadCell><HeadCell>Description</HeadCell><HeadCell>Type</HeadCell>
                    {params.map(([n, v], i) => (
                      <React.Fragment key={n}>
                        <Cell>{n}</Cell><Cell>{v}</Cell><Cell />
                        <Cell>Undefined{i === 0 && <CellDrop />}</Cell>
                      </React.Fragment>
                    ))}
                  </ParamGrid>
                  <VScroll><ScrollUp /><ScrollThumb>≡</ScrollThumb><ScrollDown /></VScroll>
                </GridWrap>
                <SheetTabs>
                  <SheetTab>
                    <SheetTabOutline width="52" height="18" viewBox="0 0 52 18">
                      <path d="M.5 0L4 17.5H47L51.5 0" fill="#fff" stroke="#111" />
                    </SheetTabOutline>
                    <SheetTabText>Global</SheetTabText>
                  </SheetTab>
                </SheetTabs>
              </ParamBody>
            </ParamPanel>
            <Splitter />
            <MsgPanel>
              <SideTab>
                <SideClose>x</SideClose>
                <SideArrow />
                <SideLabel>Message Window</SideLabel>
              </SideTab>
              <MsgBody><MsgScroll><ScrollUp /><ScrollDown /></MsgScroll></MsgBody>
            </MsgPanel>
          </Dock>
        </RightPane>
      </Main>

      <StatusBar>
        <StatusCell>Ready</StatusCell>
        <StatusCell $w={96}>High Frequency</StatusCell>
        <StatusCell $w={88}>Raster=50.000</StatusCell>
        <StatusCell $w={106}>Meshcells=66,198</StatusCell>
        <StatusCell $w={54}>Normal</StatusCell>
        <StatusCell $w={37}>mm</StatusCell>
        <StatusCell $w={36}>GHz</StatusCell>
        <StatusCell $w={26}>ns</StatusCell>
        <StatusCell $w={22}>K</StatusCell>
      </StatusBar>

      <Note>{"i want to change\nthe value of these\nparamters from\nmatlab??\nhow to interface\nCST with matlab??\nTHANKS"}</Note>
      <Ring width="110" height="186" viewBox="245 540 110 186">
        <ellipse cx="300" cy="634" rx="47" ry="84" fill="none" stroke="#dd2020" strokeWidth="5" />
      </Ring>
      <QrBox><Qr /><QrCaption>微信联系</QrCaption></QrBox>
      <WaterMark>
        <WaterBig>易迪拓<WaterBlue>培训</WaterBlue></WaterBig>
        <WaterSmall>射频和天线设计专家</WaterSmall>
      </WaterMark>
    </Root>
  );
}
